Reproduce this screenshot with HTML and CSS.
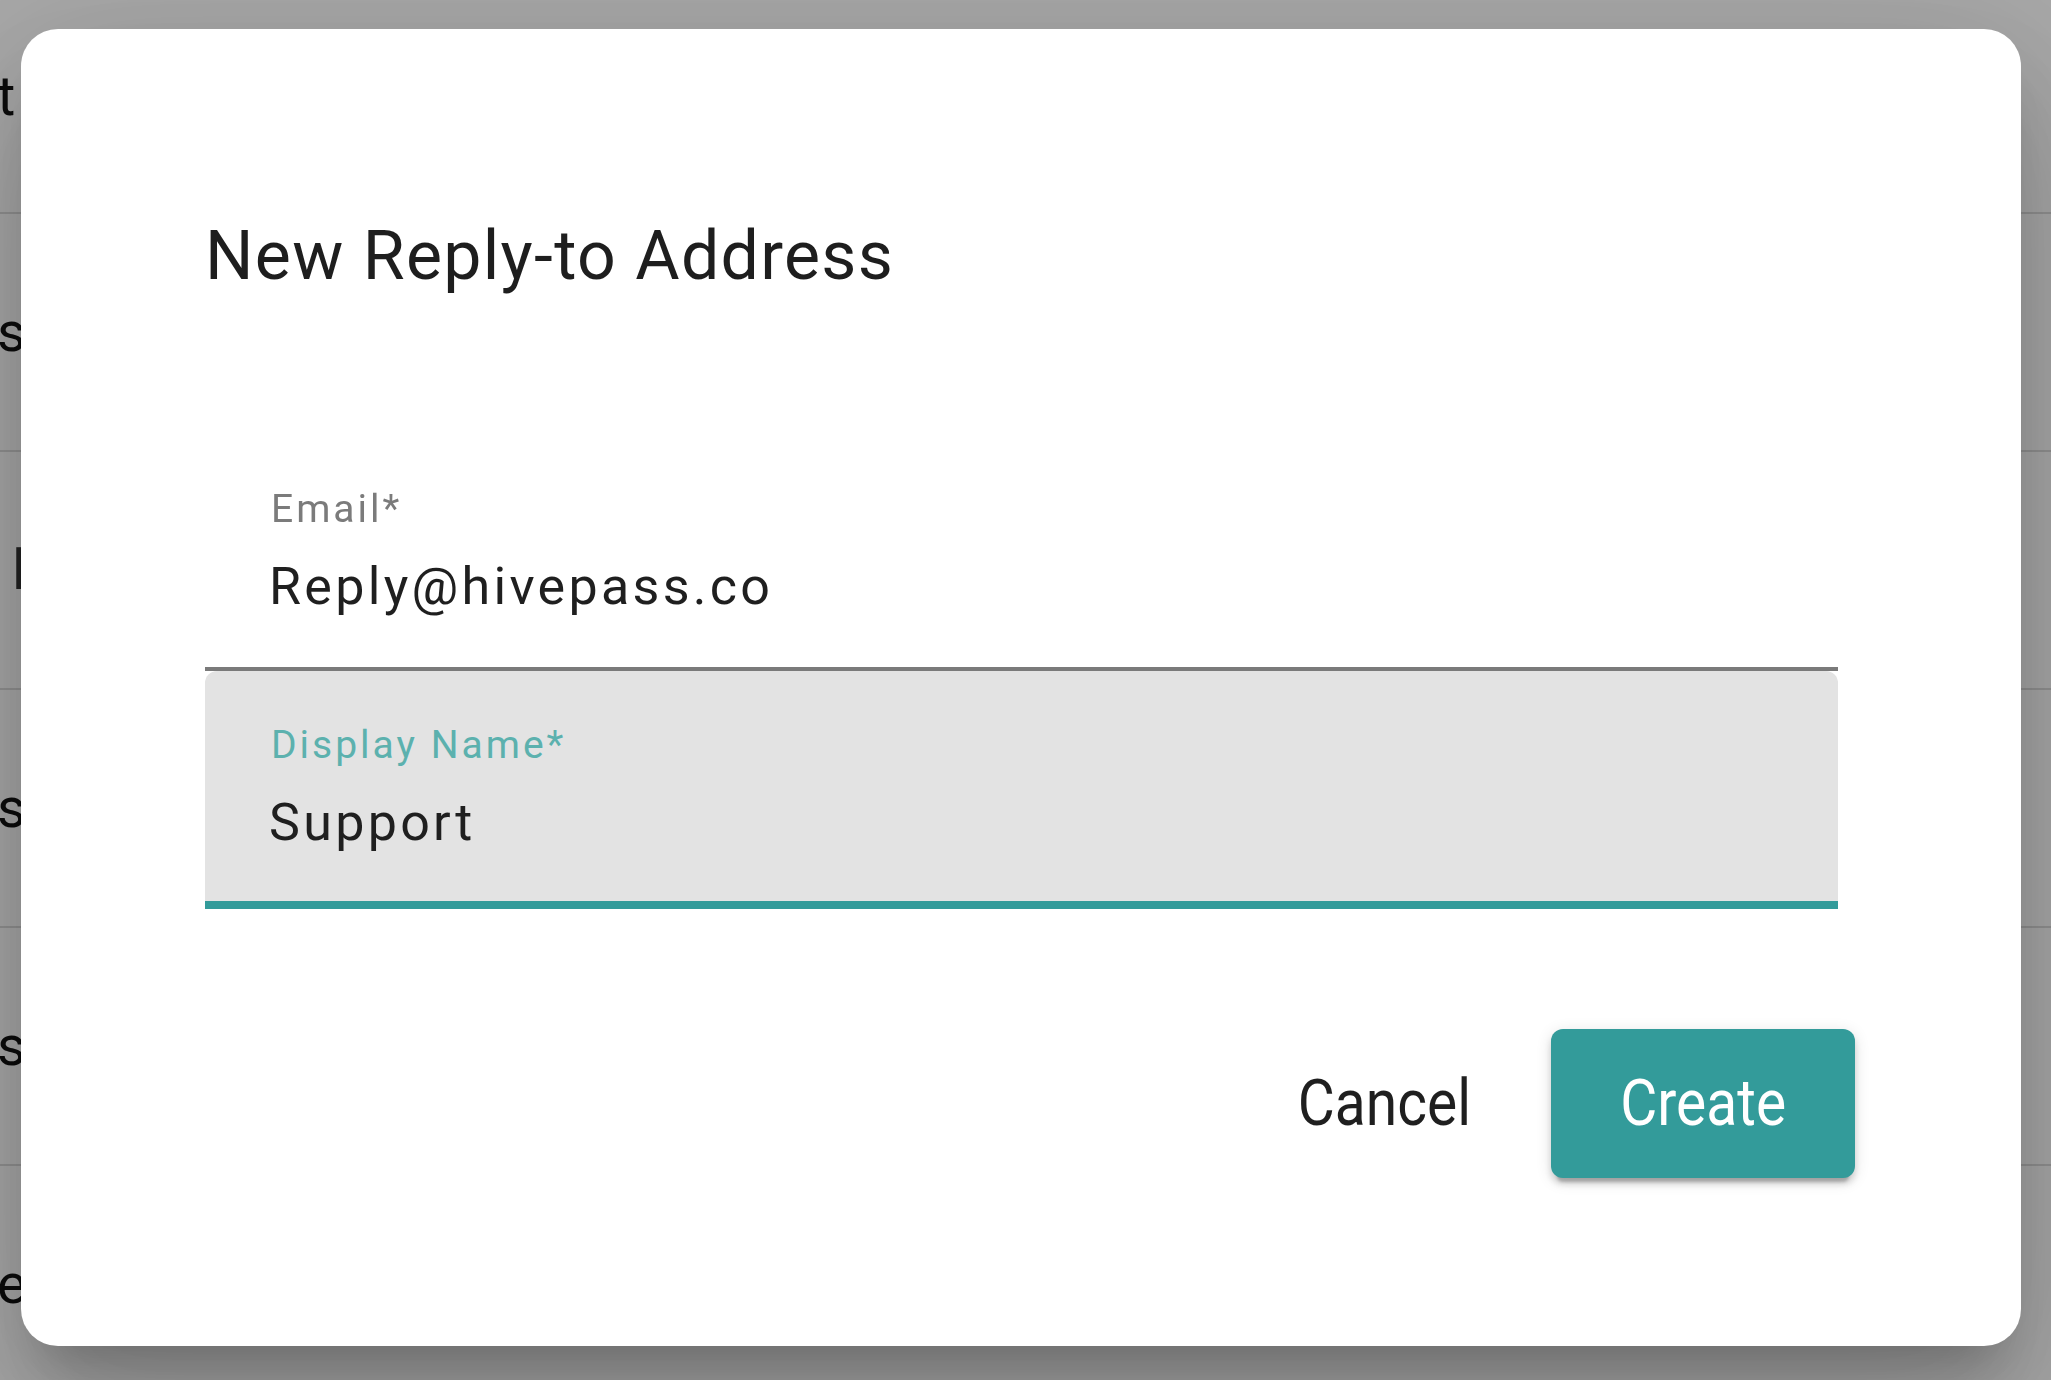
FILE: index.html
```html
<!DOCTYPE html>
<html lang="en">
<head>
<meta charset="utf-8">
<title>New Reply-to Address</title>
<link rel="stylesheet" href="styles.css">
</head>
<body>
<div class="page">
  <div class="row row-head"><span class="frag">t</span></div>
  <div class="row"><span class="frag">s</span></div>
  <div class="row"><span class="frag frag-bar">l</span></div>
  <div class="row"><span class="frag">s</span></div>
  <div class="row"><span class="frag">s</span></div>
  <div class="row"><span class="frag">ep</span></div>
</div>

<div class="backdrop">
  <div class="dialog" role="dialog" aria-labelledby="dlg-title">
    <h2 class="dialog-title" id="dlg-title">New Reply-to Address</h2>
    <div class="fields">
      <div class="field">
        <label class="field-label" for="email">Email*</label>
        <input class="field-input" id="email" type="text" value="Reply@hivepass.co">
      </div>
      <div class="field field-focused">
        <label class="field-label" for="dname">Display Name*</label>
        <input class="field-input" id="dname" type="text" value="Support">
      </div>
    </div>
    <div class="actions">
      <button class="btn btn-text" type="button"><span class="btn-label">Cancel</span></button>
      <button class="btn btn-primary" type="button"><span class="btn-label">Create</span></button>
    </div>
  </div>
</div>
</body>
</html>
```

FILE: styles.css
```css
* { box-sizing: border-box; }

html, body {
  margin: 0;
  padding: 0;
  width: 100%;
  height: 100%;
  overflow: hidden;
  background: #ffffff;
  font-family: Roboto, "Noto Sans", "Liberation Sans", sans-serif;
}

/* underlying page (mostly covered) */
.page {
  display: flex;
  flex-direction: column;
}

.row {
  height: 238px;
  display: flex;
  align-items: center;
  border-bottom: 2px solid #dcdcdc;
  padding-left: 0;
}

.row-head {
  height: 214px;
  align-items: flex-start;
  padding-top: 66px;
}

.frag {
  font-size: 56px;
  line-height: 60px;
  color: #111;
  margin-left: -3px;
}

.frag-bar {
  margin-left: 12px;
  color: #333;
}

/* overlay */
.backdrop {
  position: fixed;
  inset: 0;
  background: rgba(0, 0, 0, 0.34);
  display: flex;
  padding: 29px 30px 34px 21px;
}

.dialog {
  flex: 1;
  background: #ffffff;
  border-radius: 37px;
  box-shadow:
    0 36px 49px -23px rgba(0, 0, 0, 0.2),
    0 78px 124px 10px rgba(0, 0, 0, 0.14),
    0 29px 150px 26px rgba(0, 0, 0, 0.12);
  display: flex;
  flex-direction: column;
  padding: 187px 183px 168px 184px;
}

.dialog-title {
  margin: 0;
  font-size: 68px;
  line-height: 80px;
  font-weight: 400;
  letter-spacing: 1.3px;
  color: #1e1e1e;
}

.fields {
  margin-top: 139px;
  display: flex;
  flex-direction: column;
}

.field {
  height: 236px;
  display: flex;
  flex-direction: column;
  padding: 51px 40px 0 66px;
  border-bottom: 4px solid #7a7a7a;
}

.field-focused {
  height: 238px;
  background: #e3e3e3;
  border-radius: 12px 12px 0 0;
  border-bottom: 8px solid #339b9a;
}

.field-label {
  font-size: 39px;
  line-height: 46px;
  letter-spacing: 3px;
  color: #7b7b7b;
}

.field-focused .field-label {
  color: #5cb1ae;
}

.field-input {
  margin-top: 25px;
  margin-left: -2px;
  height: 60px;
  padding: 0;
  border: 0;
  outline: none;
  background: transparent;
  font-family: inherit;
  font-size: 52px;
  line-height: 60px;
  letter-spacing: 3.3px;
  color: #1f1f1f;
  width: 100%;
}

.actions {
  margin-top: 120px;
  margin-right: -17px;
  display: flex;
  justify-content: flex-end;
  gap: 15px;
}

.btn {
  width: 304px;
  height: 149px;
  border: 0;
  border-radius: 12px;
  font-family: inherit;
  font-size: 64px;
  font-weight: 400;
  display: flex;
  align-items: center;
  justify-content: center;
  padding: 0;
  cursor: pointer;
}

.btn-label {
  display: inline-block;
  transform: scaleX(0.89);
  line-height: 1;
}

.btn-text {
  background: transparent;
  color: #1f1f1f;
}

.btn-primary {
  background: #339b9a;
  color: #ffffff;
  box-shadow:
    0 10px 3px -6px rgba(0, 0, 0, 0.2),
    0 6px 6px 0 rgba(0, 0, 0, 0.14),
    0 3px 16px 0 rgba(0, 0, 0, 0.12);
}
```
